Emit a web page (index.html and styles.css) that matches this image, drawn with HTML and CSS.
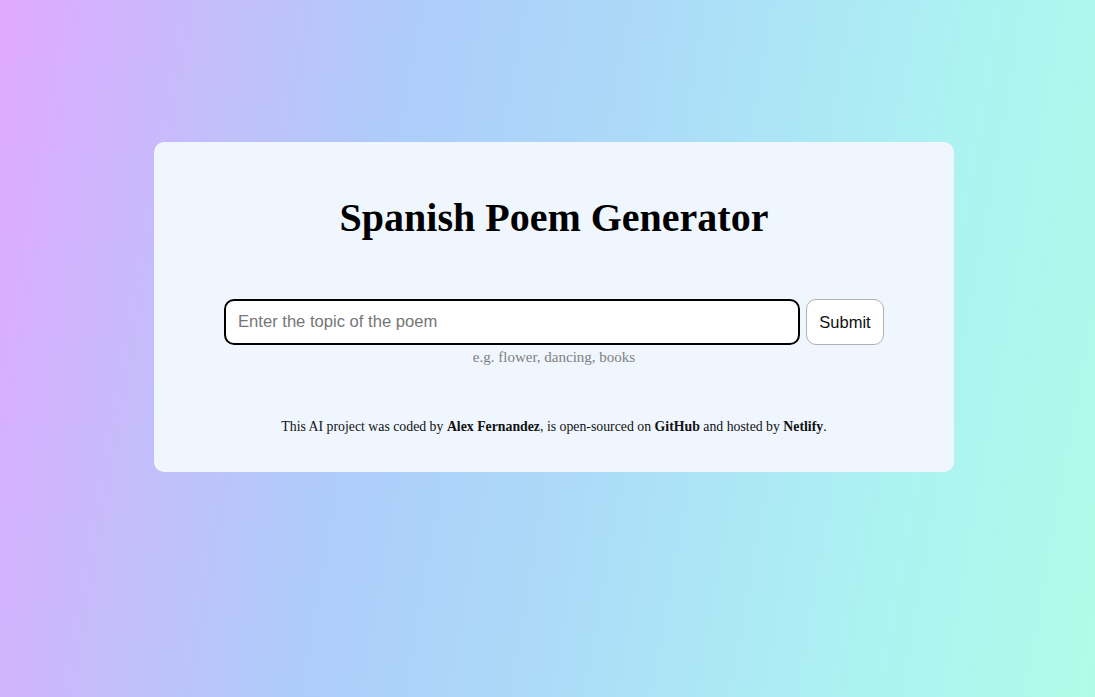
FILE: index.html
```html
<!DOCTYPE html>
<html lang="en">
<head>
<meta charset="utf-8">
<title>Spanish Poem Generator</title>
<link rel="stylesheet" href="styles.css">
</head>
<body>
<div class="page">
  <main class="card">
    <h1 class="title">Spanish Poem Generator</h1>
    <form class="form">
      <div class="row">
        <input class="topic" type="text" placeholder="Enter the topic of the poem" autofocus>
        <button class="submit" type="button">Submit</button>
      </div>
      <div class="hint">e.g. flower, dancing, books</div>
    </form>
    <footer class="footer">This AI project was coded by <b>Alex Fernandez</b>, is open-sourced on <b>GitHub</b> and hosted by <b>Netlify</b>.</footer>
  </main>
</div>
</body>
</html>
```
FILE: styles.css
```css
html, body {
  margin: 0;
  padding: 0;
  height: 100%;
}
body {
  font-family: "Liberation Serif", "Times New Roman", serif;
  background: linear-gradient(100deg, #e0a9ff 0%, #c4bdfb 18%, #adcdfa 35%, #acdbf8 55%, #acf2f2 80%, #b0fbe8 100%);
}
.page {
  display: flex;
  justify-content: center;
  padding-top: 142px;
  padding-left: 13px;
}
.card {
  width: 800px;
  height: 330px;
  box-sizing: border-box;
  background: #eff6fe;
  border-radius: 10px;
  display: flex;
  flex-direction: column;
  align-items: center;
  padding-top: 52px;
}
.title {
  margin: 0;
  font-size: 40px;
  line-height: 48px;
  font-weight: bold;
  color: #000;
}
.form {
  margin-top: 57px;
  display: flex;
  flex-direction: column;
  align-items: center;
}
.row {
  display: flex;
  gap: 6px;
}
.topic {
  width: 576px;
  height: 46px;
  box-sizing: border-box;
  border: 2px solid #000;
  border-radius: 10px;
  padding: 0 12px;
  font-family: "Liberation Sans", Arial, sans-serif;
  font-size: 16.6px;
  background: #fff;
  outline: none;
}
.topic::placeholder {
  color: #767676;
}
.submit {
  width: 78px;
  height: 46px;
  box-sizing: border-box;
  border: 1px solid #b0b0b0;
  border-radius: 10px;
  background: #fff;
  font-family: "Liberation Sans", Arial, sans-serif;
  font-size: 16.5px;
  color: #111;
}
.hint {
  margin-top: 3px;
  font-size: 15px;
  line-height: 18px;
  color: #808080;
}
.footer {
  margin-top: 52px;
  font-size: 13.8px;
  line-height: 18px;
  color: #111;
}
```
